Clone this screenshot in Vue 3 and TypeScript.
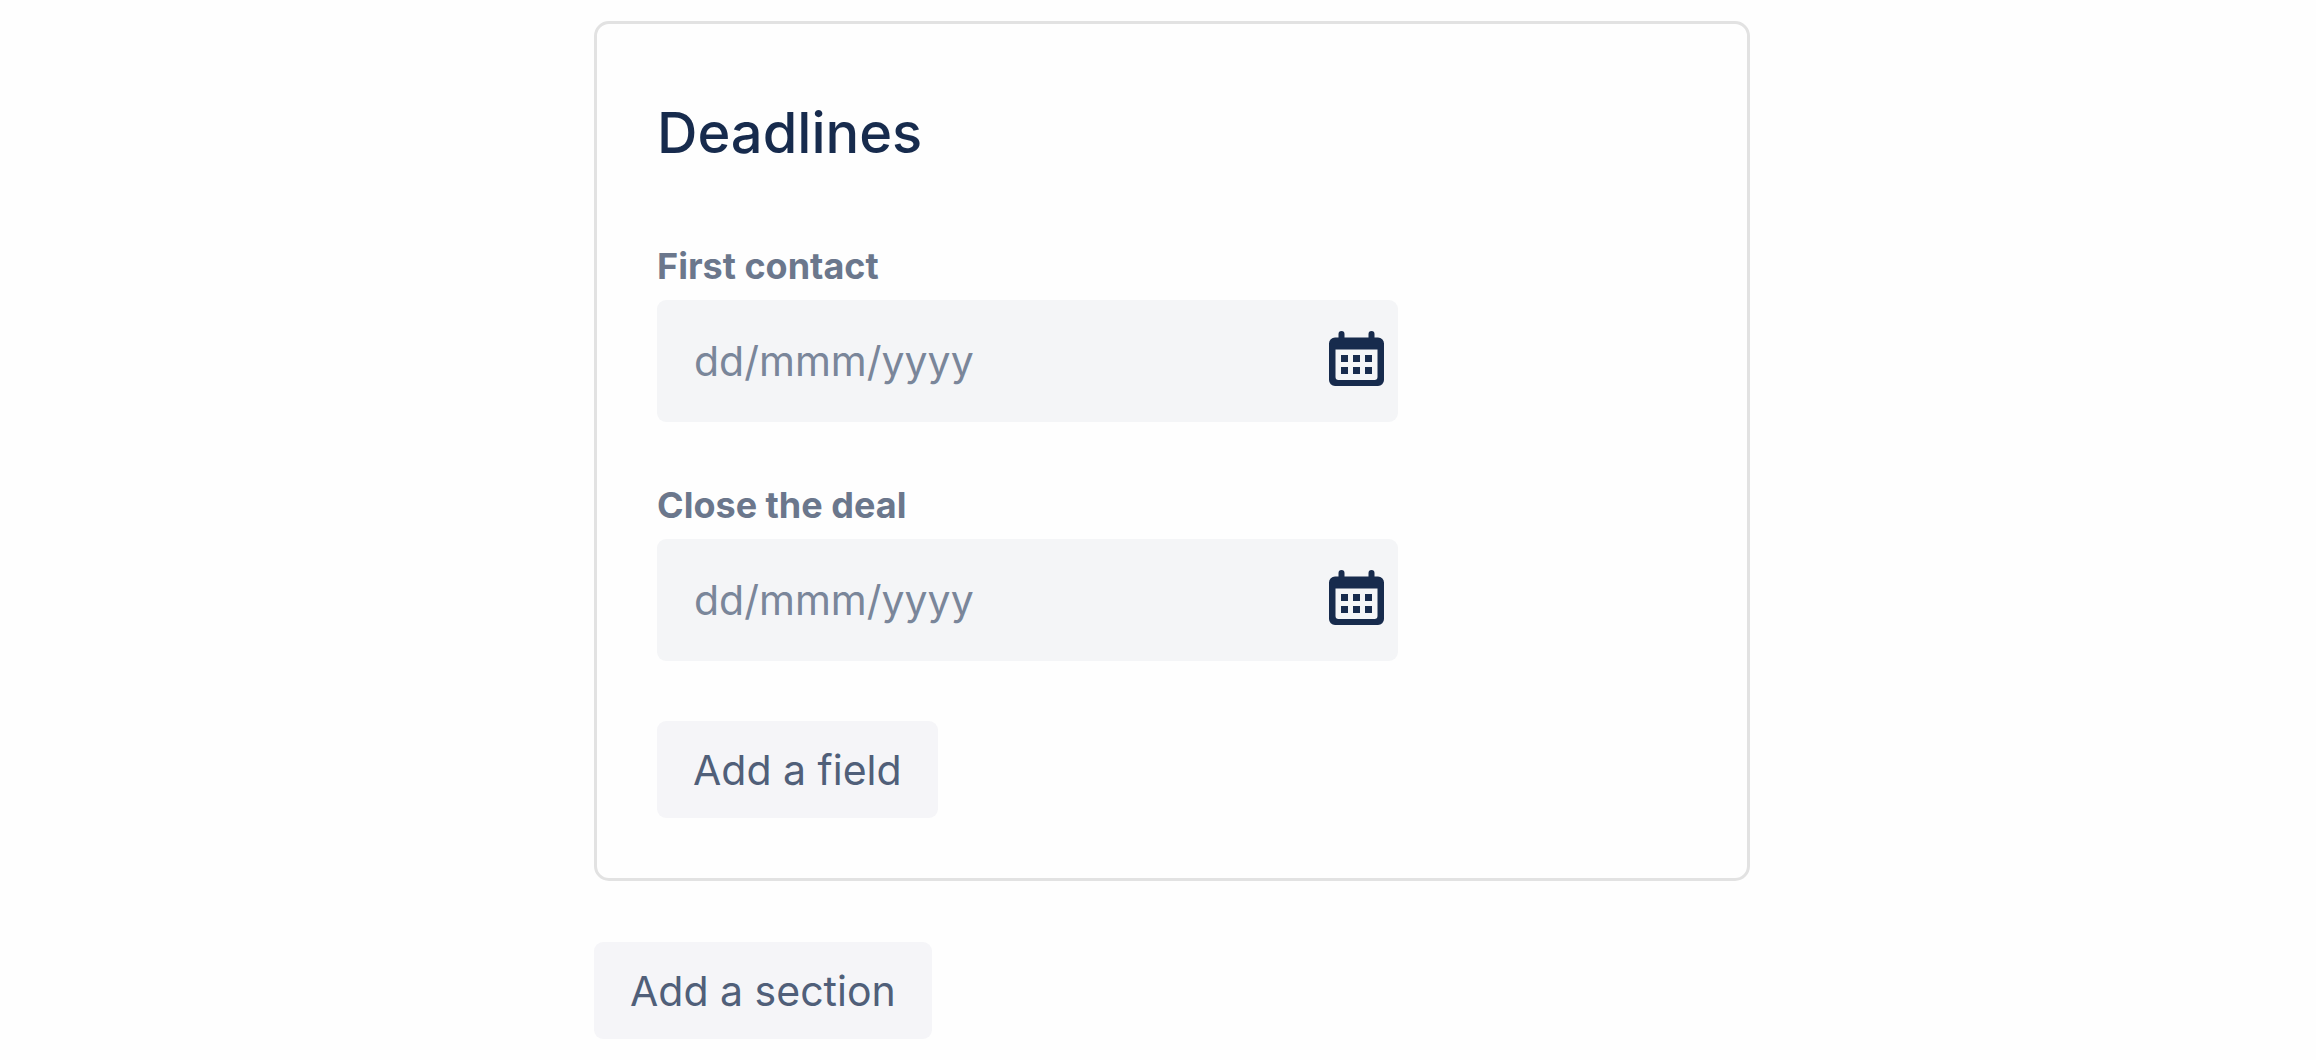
<script setup lang="ts">
import { ref } from 'vue'

interface DateField {
  id: string
  label: string
  value: string
}

const fields = ref<DateField[]>([
  { id: 'first-contact', label: 'First contact', value: '' },
  { id: 'close-deal', label: 'Close the deal', value: '' },
])

const dots: [number, number][] = [
  [12, 24], [24, 24], [36, 24],
  [12, 36], [24, 36], [36, 36],
]
</script>

<template>
  <main class="page">
    <section class="card">
      <h2 class="title">Deadlines</h2>
      <div v-for="field in fields" :key="field.id" class="field">
        <label class="label" :for="field.id">{{ field.label }}</label>
        <div class="control">
          <input :id="field.id" v-model="field.value" class="input" type="text" placeholder="dd/mmm/yyyy" />
          <button class="picker" type="button" :aria-label="`Pick a date: ${field.label}`">
            <svg class="icon" viewBox="0 0 55 60" aria-hidden="true">
              <path
                fill="currentColor"
                fill-rule="evenodd"
                d="M9.500 6.500V3a3 3 0 0 1 6 0v3.500h24V3a3 3 0 0 1 6 0v3.500H49a6 6 0 0 1 6 6V49a6 6 0 0 1-6 6H6a6 6 0 0 1-6-6V12.500a6 6 0 0 1 6-6zM6.500 18.500V46a3 3 0 0 0 3 3h36a3 3 0 0 0 3-3V18.500z"
              />
              <rect v-for="[x, y] in dots" :key="`${x}-${y}`" :x="x" :y="y" width="7" height="7" fill="currentColor" />
            </svg>
          </button>
        </div>
      </div>
      <button class="button" type="button">Add a field</button>
    </section>
    <button class="button" type="button">Add a section</button>
  </main>
</template>

<style>
body {
  margin: 0;
  background: #fefefe;
}
</style>

<style scoped>
.page {
  display: flex;
  flex-direction: column;
  align-items: flex-start;
  gap: 61px;
  box-sizing: border-box;
  min-height: 100vh;
  padding: 21px 566px 20px 594px;
  font-family: Inter, "Liberation Sans", sans-serif;
}

.card {
  box-sizing: border-box;
  width: 100%;
  padding: 60px;
  border: 3px solid #e2e2e2;
  border-radius: 15px;
}

.title {
  margin: 0 0 60px;
  color: #172b4d;
  font-size: 56px;
  font-weight: 500;
  line-height: 99px;
}

.field {
  display: flex;
  flex-direction: column;
  gap: 11px;
  max-width: 741px;
  margin-bottom: 60px;
}

.label {
  color: #6b778c;
  font-size: 36px;
  font-weight: 700;
  line-height: 46px;
}

.control {
  display: flex;
  align-items: center;
  box-sizing: border-box;
  height: 122px;
  padding: 0 14px 0 37px;
  border-radius: 9px;
  background: #f4f5f7;
}

.input {
  flex: 1;
  min-width: 0;
  padding: 0;
  border: 0;
  outline: 0;
  background: transparent;
  color: #172b4d;
  font: 400 41px/60px Inter, "Liberation Sans", sans-serif;
}

.input::placeholder {
  color: #7a869a;
  opacity: 1;
}

.picker {
  display: flex;
  padding: 0;
  border: 0;
  background: transparent;
  color: #172b4d;
  cursor: pointer;
}

.icon {
  display: block;
  width: 55px;
  height: 60px;
}

.button {
  display: block;
  height: 97px;
  padding: 0 36px;
  border: 0;
  border-radius: 9px;
  background: #f5f5f8;
  color: #505f79;
  font: 400 41px/60px Inter, "Liberation Sans", sans-serif;
  cursor: pointer;
}
</style>
